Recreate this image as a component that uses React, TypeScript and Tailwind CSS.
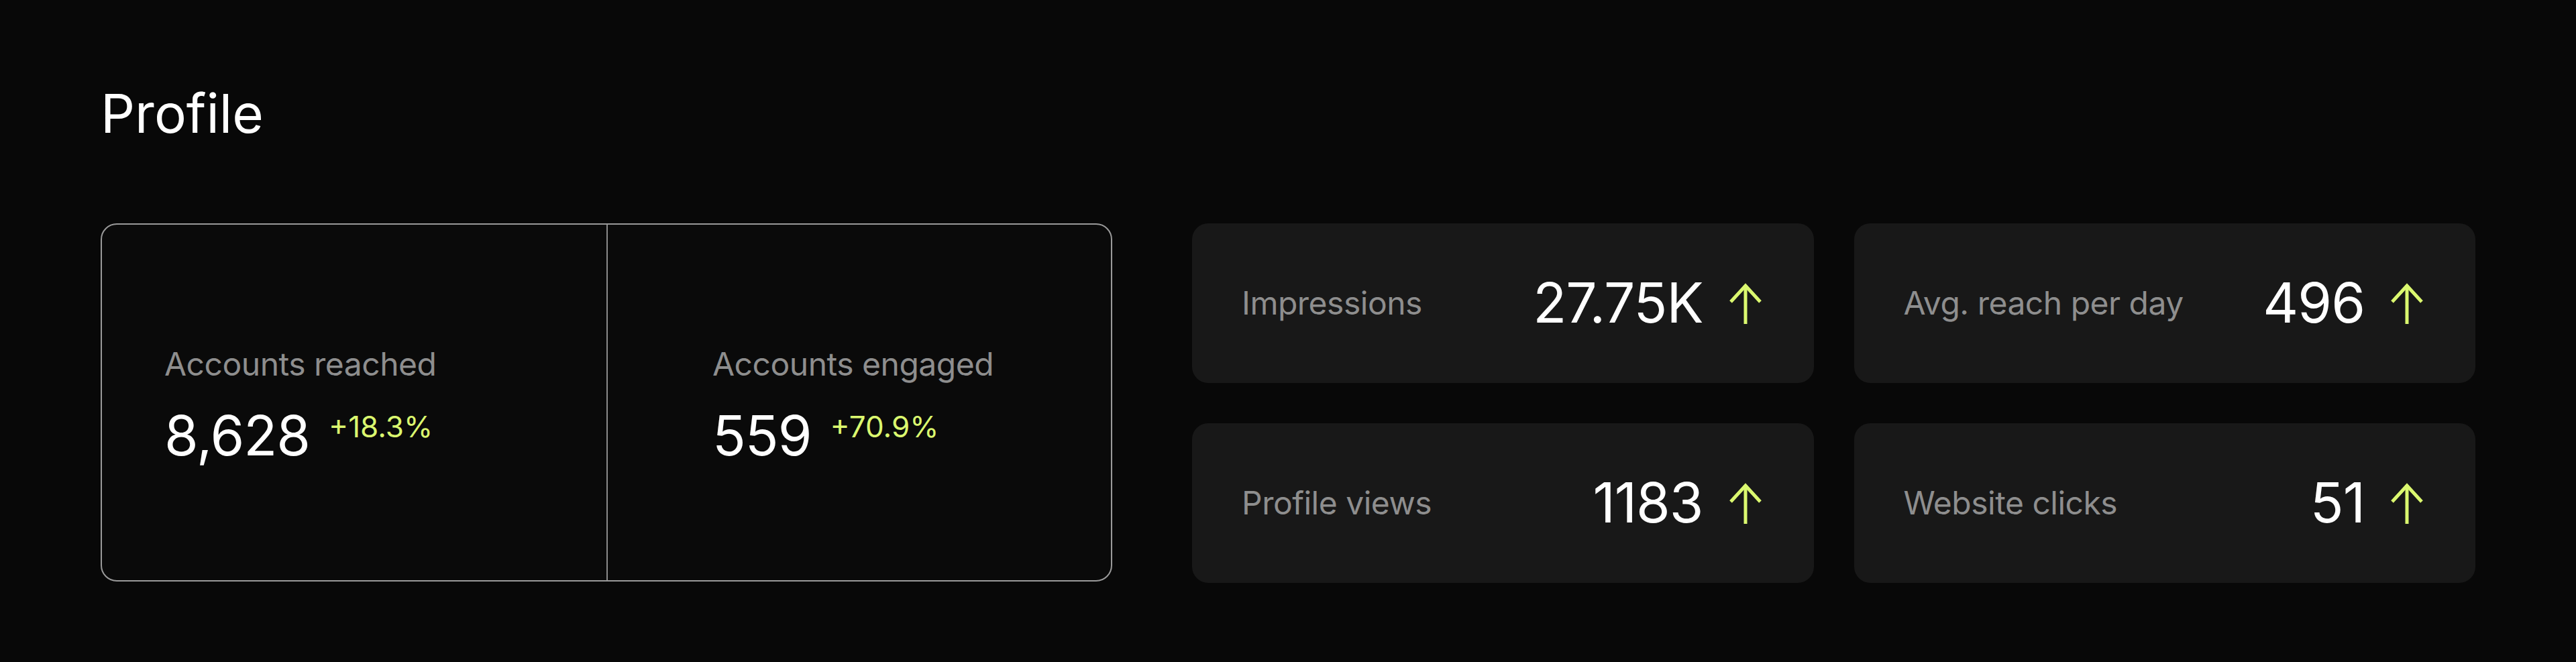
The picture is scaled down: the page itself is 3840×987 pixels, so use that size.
import React from "react";

interface Stat {
  label: string;
  value: string;
}

const stats: Stat[] = [
  { label: "Impressions", value: "27.75K" },
  { label: "Avg. reach per day", value: "496" },
  { label: "Profile views", value: "1183" },
  { label: "Website clicks", value: "51" },
];

function UpArrow() {
  return (
    <svg width="50" height="62" viewBox="0 0 50 62" fill="none">
      <line x1="25" y1="4" x2="25" y2="62" stroke="#dbf86f" strokeWidth="5" />
      <path
        d="M3 29L25 5L47 29"
        stroke="#dbf86f"
        strokeWidth="5"
        fill="none"
      />
    </svg>
  );
}

function Reach({
  label,
  value,
  change,
  className,
}: {
  label: string;
  value: string;
  change: string;
  className: string;
}) {
  return (
    <div className={"flex flex-col justify-center pt-[10px] " + className}>
      <p className="text-[48px] leading-none tracking-[-0.5px] text-[#8e8e8e]">
        {label}
      </p>
      <div className="mt-[42px] flex items-start">
        <span className="text-[82px] leading-none tracking-[-1px] text-white">
          {value}
        </span>
        <span className="ml-[28px] mt-[5px] text-[44px] leading-none text-[#dbf86f]">
          {change}
        </span>
      </div>
    </div>
  );
}

export default function App() {
  return (
    <main
      className="min-h-screen bg-[#080808] px-[150px]"
      style={{ fontFamily: "Inter, 'Noto Sans', sans-serif" }}
    >
      <h1 className="pt-[129px] text-[80px] leading-none text-white">
        Profile
      </h1>

      <div className="mt-[124px] flex gap-[119px]">
        {/* reach / engagement */}
        <div className="grid h-[534px] w-[1508px] grid-cols-2 rounded-[24px] border-2 border-[#9a9a9a] bg-[#0a0a0a]">
          <Reach
            label="Accounts reached"
            value="8,628"
            change="+18.3%"
            className="pl-[93px]"
          />
          <Reach
            label="Accounts engaged"
            value="559"
            change="+70.9%"
            className="border-l-2 border-[#8a8a8a] pl-[156px]"
          />
        </div>

        {/* small stat cards */}
        <div className="grid flex-1 grid-cols-2 gap-x-[60px] gap-y-[60px]">
          {stats.map((s) => (
            <div
              key={s.label}
              className="flex h-[238px] items-center justify-between rounded-[24px] bg-[#181818] pl-[74px] pr-[77px]"
            >
              <span className="text-[48px] leading-none tracking-[-0.5px] text-[#8e8e8e]">
                {s.label}
              </span>
              <div className="flex items-center gap-[38px]">
                <span className="text-[82px] leading-none tracking-[-1px] text-white">
                  {s.value}
                </span>
                <UpArrow />
              </div>
            </div>
          ))}
        </div>
      </div>
    </main>
  );
}
